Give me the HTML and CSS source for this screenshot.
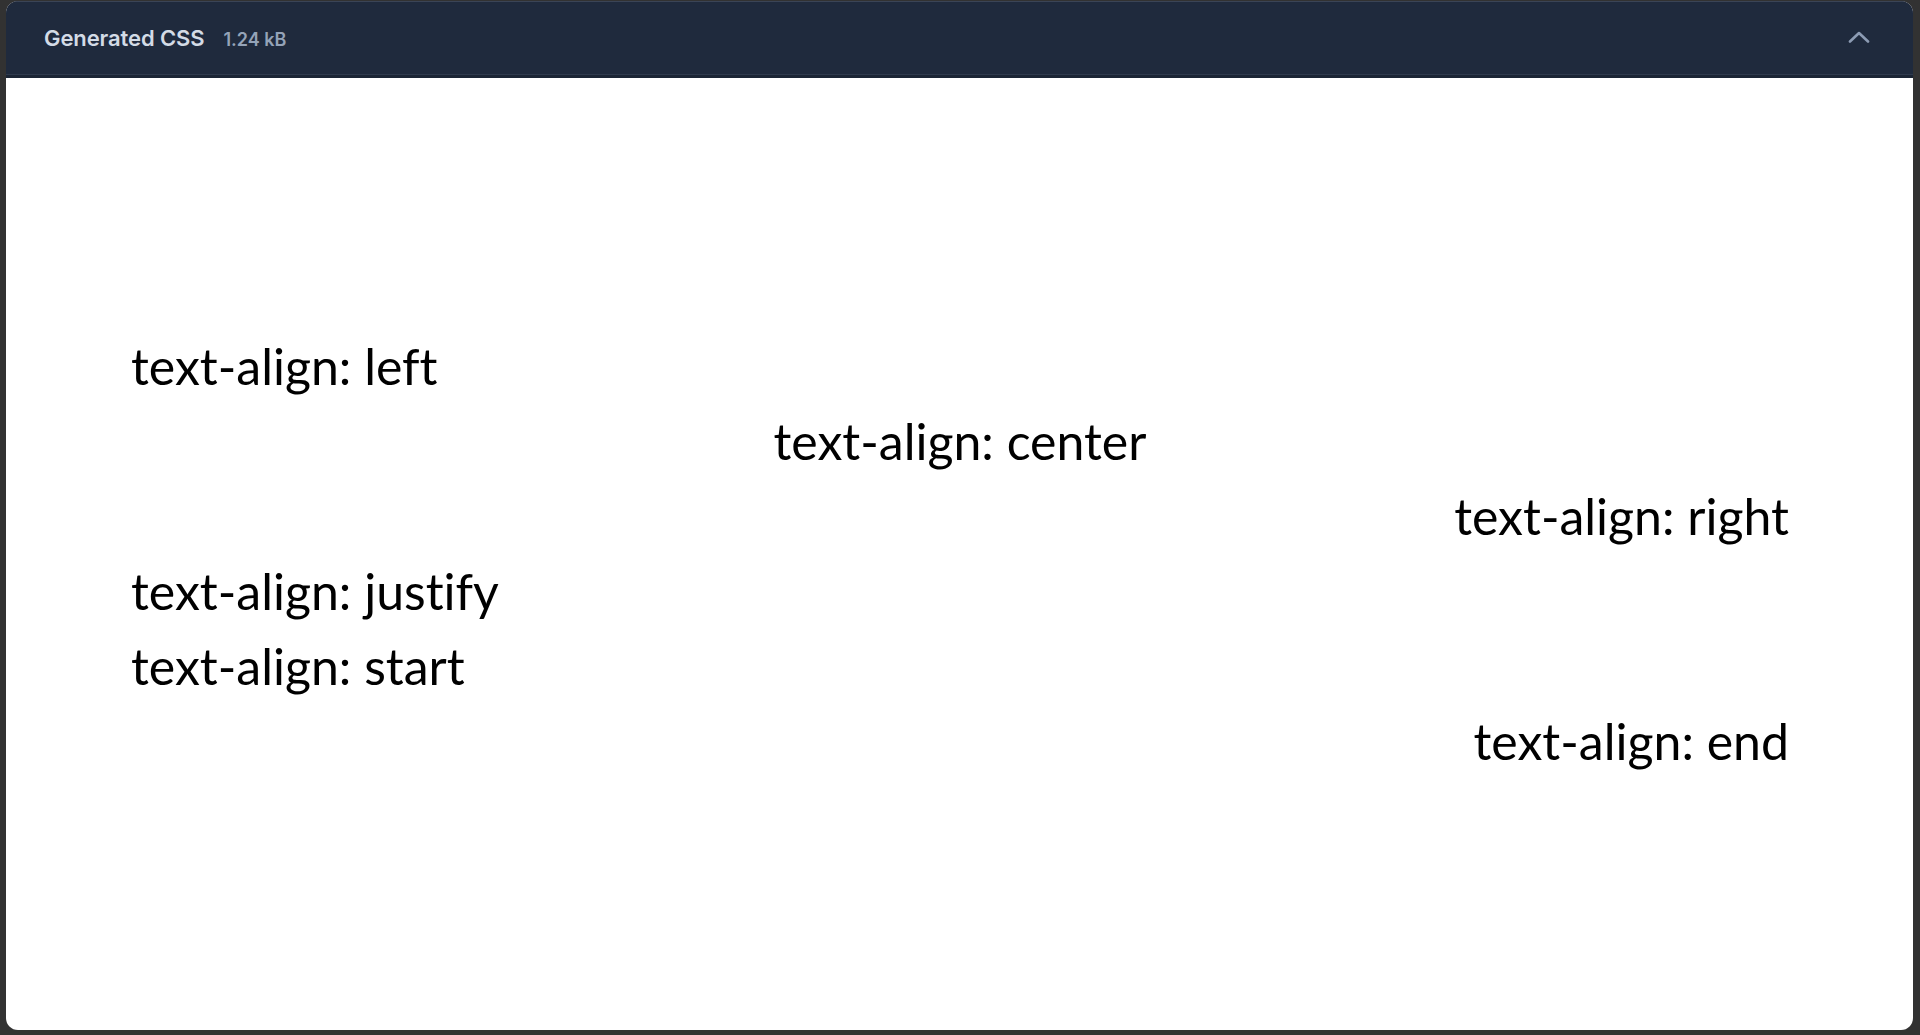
FILE: index.html
```html
<!DOCTYPE html>
<html lang="en">
<head>
<meta charset="utf-8">
<title>Generated CSS</title>
<link rel="stylesheet" href="styles.css">
</head>
<body>
<div class="panel">
  <header class="panel-header">
    <div class="title-group">
      <span class="title">Generated CSS</span>
      <span class="size">1.24 kB</span>
    </div>
    <button class="toggle" aria-label="Collapse">
      <svg width="22" height="12" viewBox="0 0 22 12" fill="none" stroke="currentColor" stroke-width="2.6" stroke-linecap="round" stroke-linejoin="round"><path d="M2 10.5 L11 2 L20 10.5"/></svg>
    </button>
  </header>
  <main class="preview">
    <div class="lines">
      <p class="line al-left">text-align: left</p>
      <p class="line al-center">text-align: center</p>
      <p class="line al-right">text-align: right</p>
      <p class="line al-justify">text-align: justify</p>
      <p class="line al-start">text-align: start</p>
      <p class="line al-end">text-align: end</p>
    </div>
  </main>
</div>
</body>
</html>
```
FILE: styles.css
```css
html, body {
  margin: 0;
  padding: 0;
  height: 100%;
}
body {
  background: #323232;
  overflow: hidden;
}
.panel {
  box-sizing: border-box;
  margin: 1px 7px 0 6px;
  height: 1029px;
  display: flex;
  flex-direction: column;
  border-radius: 12px;
  overflow: hidden;
  background: #ffffff;
}
.panel-header {
  box-sizing: border-box;
  height: 77px;
  flex: none;
  display: flex;
  align-items: center;
  justify-content: space-between;
  padding: 0 38px 0 38px;
  background: #1f2a3d;
  border-top: 1px solid #3a4456;
  border-bottom: 3px solid #1b2535;
  box-shadow: inset 0 -1px 0 #2f3a4d;
  font-family: Inter, "Liberation Sans", sans-serif;
}
.title-group {
  display: flex;
  align-items: baseline;
  gap: 19px;
  margin-top: -2px;
}
.title {
  font-size: 22px;
  font-weight: 600;
  color: #d3dbe6;
  letter-spacing: -0.1px;
}
.size {
  font-size: 18px;
  font-weight: 600;
  color: #94a3b8;
}
.toggle {
  background: none;
  border: 0;
  padding: 0;
  margin: -3px 5px 0 0;
  color: #8c9bb3;
  display: flex;
  cursor: pointer;
}
.preview {
  flex: 1;
  display: flex;
  flex-direction: column;
  justify-content: center;
  padding: 0 124px 0 125px;
}
.lines {
  font-family: Lato, "Noto Sans", sans-serif;
  font-size: 50px;
  line-height: 75px;
  color: #000;
  font-variant-ligatures: none;
  font-feature-settings: "liga" 0, "clig" 0;
}
.line {
  margin: 0;
}
.al-left { text-align: left; }
.al-center { text-align: center; }
.al-right { text-align: right; }
.al-justify { text-align: justify; }
.al-start { text-align: start; }
.al-end { text-align: end; }
```
